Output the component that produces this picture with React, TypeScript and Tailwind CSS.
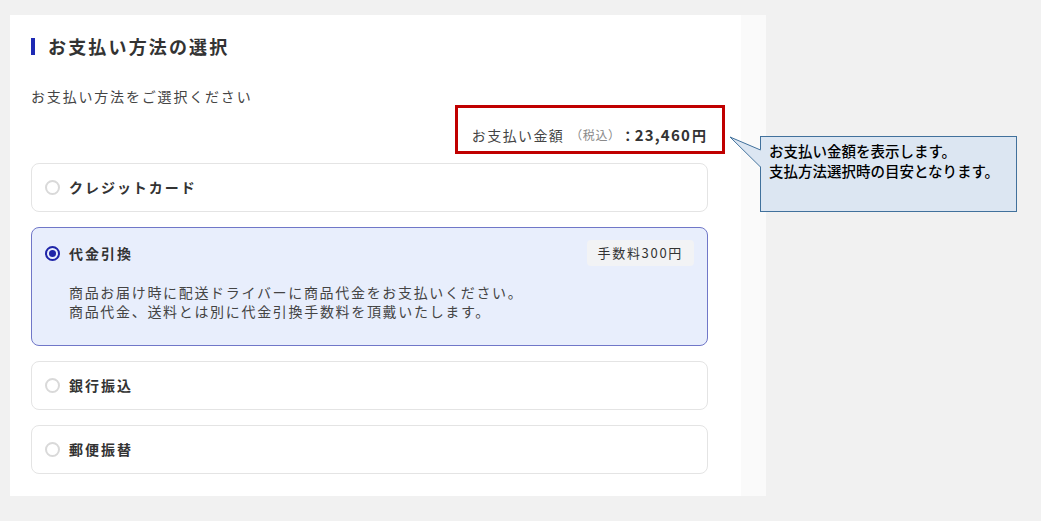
import React from "react";

type Method = {
  id: string;
  label: string;
  fee?: string;
  notes?: string[];
};

const methods: Method[] = [
  { id: "card", label: "クレジットカード" },
  {
    id: "cod",
    label: "代金引換",
    fee: "手数料300円",
    notes: [
      "商品お届け時に配送ドライバーに商品代金をお支払いください。",
      "商品代金、送料とは別に代金引換手数料を頂戴いたします。",
    ],
  },
  { id: "bank", label: "銀行振込" },
  { id: "postal", label: "郵便振替" },
];

function Radio({ checked }: { checked: boolean }) {
  if (checked) {
    return (
      <span className="flex h-[15px] w-[15px] shrink-0 items-center justify-center rounded-full border-2 border-[#1f25a8]">
        <span className="h-[7px] w-[7px] rounded-full bg-[#1f25a8]" />
      </span>
    );
  }
  return (
    <span className="h-[15px] w-[15px] shrink-0 rounded-full border-2 border-[#d9d9d9] bg-white" />
  );
}

function MethodCard({
  method,
  selected,
  onSelect,
}: {
  method: Method;
  selected: boolean;
  onSelect: () => void;
}) {
  return (
    <div
      onClick={onSelect}
      className={
        selected
          ? "cursor-pointer rounded-lg border border-[#7077c8] bg-[#e8eefc] pl-[13px] pr-[13px] pt-[12px] pb-[24px]"
          : "flex h-[49px] cursor-pointer items-center rounded-lg border border-[#e4e4e4] bg-white pl-[13px] pr-[13px]"
      }
    >
      <div className="flex h-[26px] w-full items-center">
        <Radio checked={selected} />
        <span className="ml-[9px] text-[14px] font-bold tracking-[0.14em] text-[#333]">
          {method.label}
        </span>
        {selected && method.fee && (
          <span className="ml-auto flex h-[26px] items-center rounded bg-[#f2f3f5] px-[11px] text-[13px] tracking-[0.13em] text-[#333]">
            {method.fee}
          </span>
        )}
      </div>
      {selected && method.notes && (
        <div className="mt-[17px] pl-[24px] text-[14px] leading-[19px] tracking-[0.12em] text-[#444]">
          {method.notes.map((line) => (
            <p key={line}>{line}</p>
          ))}
        </div>
      )}
    </div>
  );
}

export default function App() {
  const [selected, setSelected] = React.useState("cod");

  return (
    <div className="relative h-[521px] w-[1041px] overflow-hidden bg-[#f1f1f1] pl-[10px] pt-[15px] font-['Noto_Sans_CJK_JP',sans-serif]">
      <div className="flex h-[481px] w-[756px] bg-white">
        <div className="w-[731px] pl-[21px] pr-[33px] pt-[18px]">
          <h2 className="flex h-[26px] items-center">
            <span className="h-[17px] w-[4px] bg-[#1e2ab4]" />
            <span className="ml-[13px] text-[18px] font-bold tracking-[0.12em] text-[#333]">
              お支払い方法の選択
            </span>
          </h2>

          <p className="mt-[27px] h-[20px] text-[14px] leading-[20px] tracking-[0.13em] text-[#444]">
            お支払い方法をご選択ください
          </p>

          {/* total row, framed in red */}
          <div className="relative mt-[19px] flex h-[20px] items-center justify-end pr-[2px] text-[#333]">
            <span className="text-[14px] tracking-[0.1em] text-[#444]">お支払い金額</span>
            <span className="ml-[6px] text-[12px] tracking-[0.05em] text-[#8a8a8a]">（税込）</span>
            <span className="text-[14px] font-bold">：</span>
            <span className="text-[15px] font-bold tracking-[0.08em]">23,460</span>
            <span className="ml-[1px] text-[14px] font-bold">円</span>
            <div className="absolute -top-[20px] -right-[17px] h-[49px] w-[270px] border-[3px] border-[#c00000]" />
          </div>

          <div className="mt-[18px] flex flex-col gap-[15px]">
            {methods.map((m) => (
              <MethodCard
                key={m.id}
                method={m}
                selected={selected === m.id}
                onSelect={() => setSelected(m.id)}
              />
            ))}
          </div>
        </div>
        <div className="w-[25px] bg-[#fafafa]" />
      </div>

      {/* note bubble */}
      <div className="absolute left-[760px] top-[136px] h-[76px] w-[257px] border border-[#41719c] bg-[#dce6f2] pl-[8px] pt-[4px] text-[14.5px] font-medium leading-[20px] text-black">
        <p>お支払い金額を表示します。</p>
        <p>支払方法選択時の目安となります。</p>
      </div>
      <svg
        className="absolute left-[729px] top-[135px]"
        width="33"
        height="34"
        viewBox="0 0 33 34"
      >
        <polygon points="1,2 32,15 32,32" fill="#dce6f2" />
        <polyline points="31.5,15 1,2 31.5,32" fill="none" stroke="#41719c" strokeWidth="1" />
      </svg>
    </div>
  );
}
